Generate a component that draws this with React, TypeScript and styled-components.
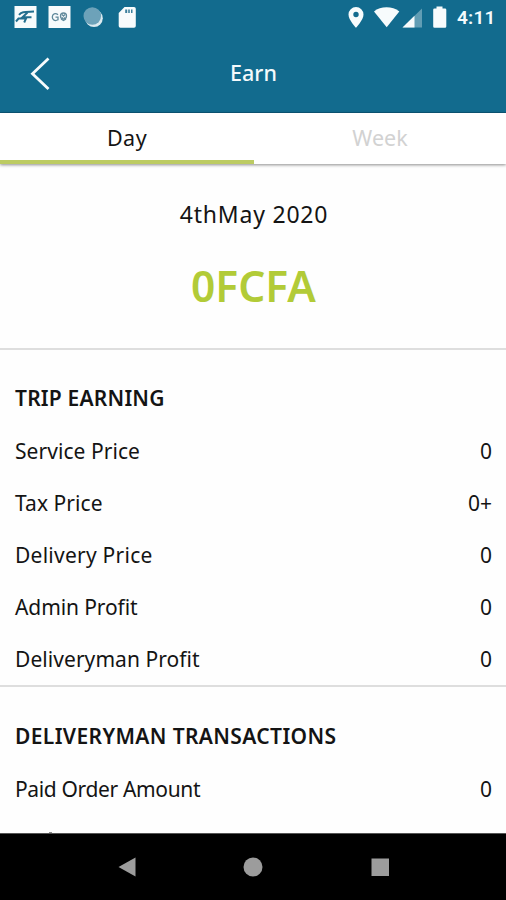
import React from "react";
import styled, { createGlobalStyle } from "styled-components";

const GlobalStyle = createGlobalStyle`
  * { box-sizing: border-box; }
  body { margin: 0; background: #fff; }
`;

const Screen = styled.div`
  width: 506px;
  height: 900px;
  display: flex;
  flex-direction: column;
  overflow: hidden;
  background: #fefefe;
  color: #141414;
  font-family: "Noto Sans", "Open Sans", sans-serif;
`;

const Header = styled.header`
  flex: none;
  height: 113px;
  background: #126b8e;
  border-bottom: 1px solid #0c5878;
  color: #f4fafc;
`;

const StatusBar = styled.div`
  height: 36px;
  padding: 0 9px 0 14px;
  display: flex;
  align-items: center;
  justify-content: space-between;
`;

const StatusGroup = styled.div`
  display: flex;
  align-items: center;
`;

const Clock = styled.span`
  margin-left: 10px;
  width: 40px;
  white-space: nowrap;
  font: 600 19px/36px Roboto, sans-serif;
  letter-spacing: 0.2px;
`;

const TitleBar = styled.div`
  height: 76px;
  display: grid;
  grid-template-columns: 80px 1fr 80px;
  align-items: center;
`;

const BackButton = styled.button`
  width: 80px;
  height: 76px;
  padding: 0;
  border: 0;
  background: none;
  display: flex;
  align-items: center;
`;

const Title = styled.h1`
  margin: 0 0 2px;
  padding-left: 1px;
  text-align: center;
  font-size: 21.5px;
  line-height: 28px;
  font-weight: 500;
`;

const Tabs = styled.nav`
  flex: none;
  height: 51px;
  display: grid;
  grid-template-columns: 254px 252px;
  background: #fff;
  box-shadow: 0 1px 3px rgba(0, 0, 0, 0.45);
`;

const Tab = styled.button<{ $active?: boolean }>`
  height: 51px;
  padding: 3px 0 0;
  border: 0;
  border-bottom: 4px solid ${(p) => (p.$active ? "#bccb62" : "#fff")};
  background: none;
  color: ${(p) => (p.$active ? "#141414" : "#d2d2d2")};
  font: 400 21.5px/44px "Noto Sans", sans-serif;
  letter-spacing: ${(p) => (p.$active ? "0.5px" : "0")};
`;

const Content = styled.main`
  flex: 1;
  min-height: 0;
  overflow: hidden;
`;

const Summary = styled.section`
  height: 186px;
  padding-top: 35px;
  border-bottom: 2px solid #dedede;
  text-align: center;
`;

const DateLabel = styled.div`
  font-size: 23px;
  line-height: 30px;
  letter-spacing: 0.8px;
  padding-left: 2px;
`;

const Amount = styled.div`
  margin-top: 28px;
  padding-left: 1px;
  color: #b2cb37;
  font-size: 42.5px;
  line-height: 58px;
  font-weight: 600;
`;

const Section = styled.section`
  padding: 23px 14px 0 15px;
  height: 337px;
  border-bottom: 2px solid #dedede;
`;

const SectionTitle = styled.h2<{ $tracking: number }>`
  margin: 0;
  padding-bottom: 2px;
  font-size: 21px;
  line-height: 50px;
  font-weight: 600;
  letter-spacing: ${(p) => p.$tracking}px;
`;

const Row = styled.div`
  height: 52px;
  display: flex;
  justify-content: space-between;
  font-size: 21px;
  line-height: 52px;
  white-space: nowrap;
`;

const Transactions = styled(Section)`
  padding-top: 24px;
`;

const Label = styled.span<{ $tracking: number }>`
  letter-spacing: ${(p) => p.$tracking}px;
`;

const NavBar = styled.footer`
  flex: none;
  height: 67px;
  background: #000;
  border-top: 1px solid #555;
  padding-left: 63.5px;
  display: grid;
  grid-template-columns: repeat(3, 126.6px);
  align-items: center;
  justify-items: center;
`;

type Entry = { label: string; value: string; tracking: number };

const trip: Entry[] = [
  { label: "Service Price", value: "0", tracking: 0.06 },
  { label: "Tax Price", value: "0+", tracking: 0.06 },
  { label: "Delivery Price", value: "0", tracking: 0.25 },
  { label: "Admin Profit", value: "0", tracking: -0.1 },
  { label: "Deliveryman Profit", value: "0", tracking: 0.06 },
];

const transactions: Entry[] = [
  { label: "Paid Order Amount", value: "0", tracking: -0.35 },
];

const NextRowEdge = styled.div`
  margin: 17px 0 0 34px;
  width: 3px;
  height: 1px;
  background: #8a8a8a;
`;

const EntryRow = ({ label, value, tracking }: Entry) => (
  <Row>
    <Label $tracking={tracking}>{label}</Label>
    <span>{value}</span>
  </Row>
);

const Notifications = () => (
  <svg width="124" height="32" viewBox="14 2 124 32">
    <rect x="14.5" y="6" width="22" height="22" fill="#f7fbfc" />
    <g fill="none" stroke="#236f8f" strokeWidth="2">
      <path d="M19 14.800C22 11.500 25 12 34 11.600" />
      <path d="M27.500 12.500L22.500 17.200H31.500" />
      <path d="M16 21.500L18.500 18.600H26L24.200 22.500" />
    </g>
    <rect x="48.5" y="6" width="22" height="22" fill="#f7fbfc" />
    <g fill="none" stroke="#5f899b" strokeWidth="1.3">
      <path d="M58 14.8c-2.600-2.400-5.700-.8-5.700 2.200s2.600 4.500 5.700 2.800v-2.600h-2.500" />
      <circle cx="63.500" cy="16" r="3" />
      <path d="M62 14.500l3 3M65 14.500l-3 3M61 19l2.500 1.500 2.500-1.500" />
    </g>
    <circle cx="94" cy="18.200" r="8.800" fill="#dceaf0" />
    <circle cx="92.300" cy="16" r="8.800" fill="#6da2b9" />
    <path d="M124.500 7H134a1.800 1.800 0 0 1 1.800 1.800V26a1.800 1.800 0 0 1-1.800 1.800h-13.500a1.800 1.800 0 0 1-1.800-1.800V13z" fill="#f7fbfc" />
    <path d="M125.200 9.500h2v3.500h-2zM128.200 9.500h1.600v3.500h-1.600zM131 9.500h1.500v3.500H131z" fill="#3b7f9c" />
  </svg>
);

const SystemIcons = () => (
  <svg width="100" height="32" viewBox="347 2 100 32" fill="#f7fbfc">
    <path
      fillRule="evenodd"
      d="M356 7a7.500 7.500 0 0 0-7.500 7.500C348.500 20 356 27.800 356 27.800S363.500 20 363.500 14.500A7.500 7.500 0 0 0 356 7zm0 4.800a2.700 2.700 0 1 1 0 5.400 2.700 2.700 0 0 1 0-5.400z"
    />
    <path d="M374 11.500C380.500 5.900 392.500 5.900 399.300 11.500L386.700 27.300z" />
    <path d="M422 8.500V27.500H402.500z" opacity=".35" />
    <path d="M414.500 15.800V27.500H402.500z" />
    <path d="M436.500 6.500h6v2h2.500a1.300 1.300 0 0 1 1.300 1.300v16.700a1.300 1.300 0 0 1-1.300 1.300h-10.500a1.300 1.300 0 0 1-1.300-1.300V9.800a1.300 1.300 0 0 1 1.300-1.300h2z" />
  </svg>
);

export default function App() {
  return (
    <>
      <GlobalStyle />
      <Screen>
        <Header>
          <StatusBar>
            <StatusGroup>
              <Notifications />
            </StatusGroup>
            <StatusGroup>
              <SystemIcons />
              <Clock>4:11</Clock>
            </StatusGroup>
          </StatusBar>
          <TitleBar>
            <BackButton aria-label="Back">
              <svg width="60" height="40" viewBox="0 54 60 40" fill="none">
                <path d="M48.500 58.500L32.500 73.700L48.500 89" stroke="#f7fbfc" strokeWidth="2.800" />
              </svg>
            </BackButton>
            <Title>Earn</Title>
          </TitleBar>
        </Header>
        <Tabs>
          <Tab $active>Day</Tab>
          <Tab>Week</Tab>
        </Tabs>
        <Content>
          <Summary>
            <DateLabel>4thMay 2020</DateLabel>
            <Amount>0FCFA</Amount>
          </Summary>
          <Section>
            <SectionTitle $tracking={0.2}>TRIP EARNING</SectionTitle>
            {trip.map((entry) => (
              <EntryRow key={entry.label} {...entry} />
            ))}
          </Section>
          <Transactions>
            <SectionTitle $tracking={0.37}>DELIVERYMAN TRANSACTIONS</SectionTitle>
            {transactions.map((entry) => (
              <EntryRow key={entry.label} {...entry} />
            ))}
            <NextRowEdge />
          </Transactions>
        </Content>
        <NavBar>
          <svg width="20" height="20" viewBox="0 0 20 20" fill="#9c9c9c"><path d="M1.500 10L18.500 .5V19.500z" /></svg>
          <svg width="20" height="20" viewBox="0 0 20 20" fill="#9c9c9c"><circle cx="10" cy="10" r="9.500" /></svg>
          <svg width="20" height="20" viewBox="0 0 20 20" fill="#9c9c9c"><path d="M1.500 1.500h17.500v17.500H1.500z" /></svg>
        </NavBar>
      </Screen>
    </>
  );
}
